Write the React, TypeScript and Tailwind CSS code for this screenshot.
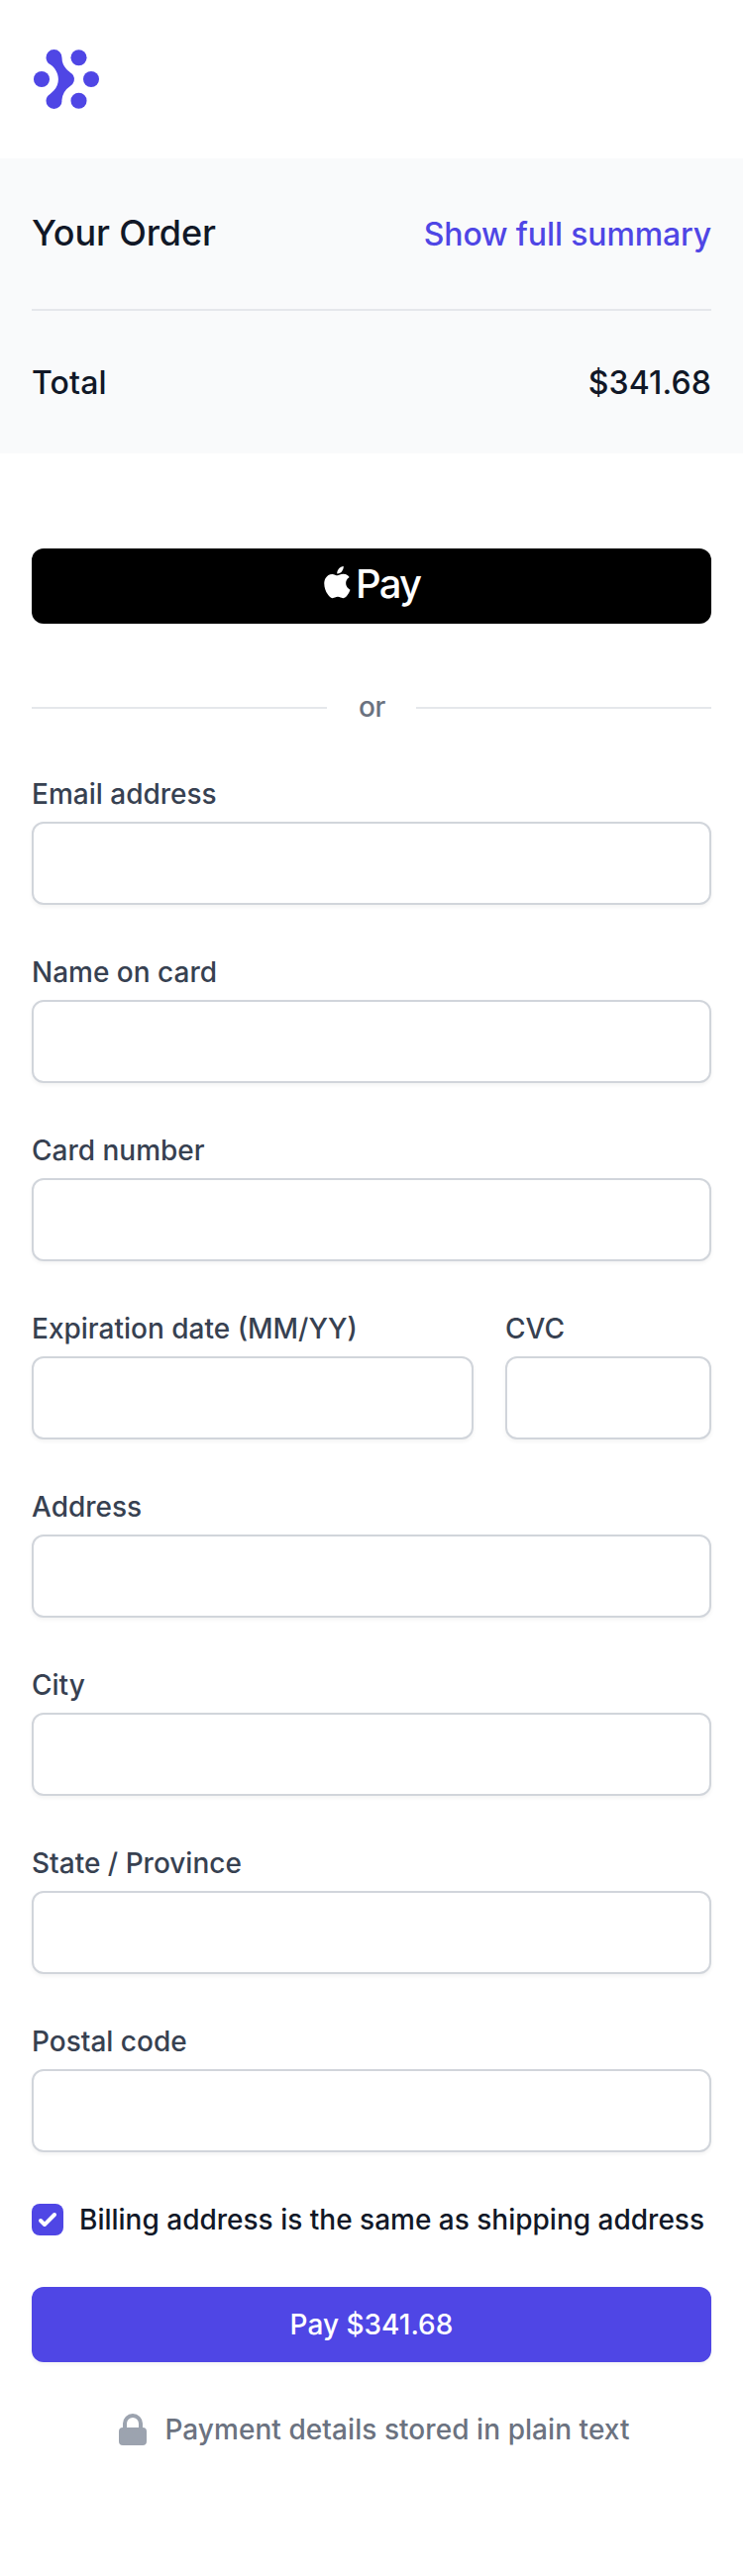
import React from "react";

type FieldProps = { id: string; label: string; className?: string };

function Field({ id, label, className = "col-span-2" }: FieldProps) {
  return (
    <div className={className}>
      <label htmlFor={id} className="block text-[28px] leading-10 font-medium text-[#374151]">
        {label}
      </label>
      <input
        id={id}
        type="text"
        className="mt-2 block h-[84px] w-full rounded-xl border-2 border-[#d1d5db] bg-white px-6 text-[28px] shadow-[0_2px_4px_0_rgba(0,0,0,0.05)] outline-none focus:border-[#6366f1]"
      />
    </div>
  );
}

function Logo() {
  return (
    <svg className="h-16 w-[70px] text-[#4f46e5]" viewBox="0 0 35 32" fill="currentColor" aria-hidden="true">
      <path d="M15.258 26.865a4.043 4.043 0 01-1.133 2.917A4.006 4.006 0 0111.253 31a3.992 3.992 0 01-2.872-1.218 4.028 4.028 0 01-1.133-2.917c.009-.698.2-1.382.557-1.981.356-.6.863-1.094 1.47-1.433-.024.109.09-.055 0 0l1.86-1.652a8.495 8.495 0 002.304-5.793c0-2.926-1.711-5.901-4.17-7.457.094.055-.036-.094 0 0A3.952 3.952 0 017.8 7.116a3.975 3.975 0 01-.557-1.98 4.042 4.042 0 011.133-2.918A4.006 4.006 0 0111.247 1a3.99 3.99 0 012.872 1.218 4.025 4.025 0 011.133 2.917 8.521 8.521 0 002.347 5.832l.817.8c.326.285.668.551 1.024.798.621.33 1.142.826 1.504 1.431a3.902 3.902 0 01-1.504 5.442c.033-.067-.063.036 0 0a8.968 8.968 0 00-3.024 3.183 9.016 9.016 0 00-1.262 4.244z" />
      <circle cx="23.75" cy="5.12" r="4.02" />
      <circle cx="23.75" cy="26.86" r="4.02" />
      <circle cx="30" cy="15.99" r="4.01" />
      <circle cx="5" cy="15.99" r="4.02" />
    </svg>
  );
}

function Apple() {
  return (
    <svg className="h-[33px] w-[28px]" viewBox="0.5 0 14 16.5" fill="currentColor" aria-hidden="true">
      <path d="M9.536 2.579c-.571.675-1.485 1.208-2.4 1.132-.113-.914.334-1.884.858-2.484C8.565.533 9.564.038 10.374 0c.095.951-.276 1.884-.838 2.579zm.829 1.313c-1.324-.077-2.457.751-3.085.751-.638 0-1.6-.713-2.647-.694-1.362.019-2.628.79-3.323 2.017-1.429 2.455-.372 6.09 1.009 8.087.676.99 1.485 2.075 2.552 2.036 1.009-.038 1.409-.656 2.628-.656 1.228 0 1.58.656 2.647.637 1.104-.019 1.8-.99 2.475-1.979.771-1.122 1.086-2.217 1.105-2.274-.02-.019-2.133-.828-2.152-3.263-.02-2.036 1.666-3.007 1.742-3.064-.952-1.408-2.437-1.56-2.951-1.598z" />
    </svg>
  );
}

export default function App() {
  return (
    <main className="min-h-[2602px] w-full bg-white font-['Inter',sans-serif] text-[#111827] antialiased">
      <header className="px-8 py-12">
        <Logo />
      </header>

      <section className="bg-[#f9fafb] px-8 pt-[47px] pb-12">
        <div className="flex items-baseline justify-between">
          <h2 className="text-[36px] leading-[56px] font-medium tracking-[-0.12px]">Your Order</h2>
          <button type="button" className="text-[32px] leading-[48px] font-medium tracking-[-0.14px] text-[#4f46e5]">
            Show full summary
          </button>
        </div>
        <p className="mt-[49px] flex h-[98px] items-center justify-between border-t-2 border-[#e5e7eb] pt-[50px] text-[32px] leading-[46px] font-medium tracking-[0.12px]">
          <span>Total</span>
          <span>$341.68</span>
        </p>
      </section>

      <section className="px-8 pt-24">
        <button
          type="button"
          aria-label="Apple Pay"
          className="flex h-[76px] w-full rounded-xl bg-black pt-[18px] pl-[295px] text-white"
        >
          <Apple />
          <span className="ml-1 text-[40px] leading-[36px] font-[450] tracking-[-1.8px]">Pay</span>
        </button>

        <div className="mt-16 flex h-[42px] items-center gap-8">
          <div className="h-0.5 flex-1 bg-[#e5e7eb]" />
          <span className="w-[26px] pb-0.5 text-center text-[28px] leading-10 font-medium tracking-[-0.4px] text-[#6b7280]">or</span>
          <div className="h-0.5 flex-1 bg-[#e5e7eb]" />
        </div>

        <form className="mt-[46px]" onSubmit={(e) => e.preventDefault()}>
          <div className="grid grid-cols-[446px_208px] gap-x-8 gap-y-12">
            <Field id="email" label="Email address" />
            <Field id="name" label="Name on card" />
            <Field id="card" label="Card number" />
            <Field id="expiration" label="Expiration date (MM/YY)" className="col-span-1" />
            <Field id="cvc" label="CVC" className="col-span-1" />
            <Field id="address" label="Address" />
            <Field id="city" label="City" />
            <Field id="state" label="State / Province" />
            <Field id="postal" label="Postal code" />
          </div>

          <label className="mt-12 flex items-center gap-4 text-[28px] leading-10 font-medium">
            <span className="flex size-8 shrink-0 rounded-lg bg-[#4f46e5] text-white">
              <svg className="size-8" viewBox="0 0 16 16" fill="currentColor" aria-hidden="true">
                <path d="M12.207 4.793a1 1 0 010 1.414l-5 5a1 1 0 01-1.414 0l-2-2a1 1 0 011.414-1.414L6.5 9.086l4.293-4.293a1 1 0 011.414 0z" />
              </svg>
            </span>
            <span className="whitespace-nowrap">Billing address is the same as shipping address</span>
          </label>

          <button
            type="submit"
            className="mt-12 flex h-[76px] w-full items-center justify-center rounded-xl bg-[#4f46e5] text-[28px] leading-10 font-medium text-white shadow-[0_2px_4px_0_rgba(0,0,0,0.05)]"
          >
            Pay $341.68
          </button>

          <p className="mt-12 flex items-center justify-center text-[28px] leading-10 font-medium tracking-[0.06px] text-[#6b7280]">
            <svg className="mr-3 size-10 text-[#9ca3af]" viewBox="0 0 20 20" fill="currentColor" aria-hidden="true">
              <path
                fillRule="evenodd"
                clipRule="evenodd"
                d="M5 9V7a5 5 0 0110 0v2a2 2 0 012 2v5a2 2 0 01-2 2H5a2 2 0 01-2-2v-5a2 2 0 012-2zm8-2v2H7V7a3 3 0 016 0z"
              />
            </svg>
            Payment details stored in plain text
          </p>
        </form>
      </section>
    </main>
  );
}
